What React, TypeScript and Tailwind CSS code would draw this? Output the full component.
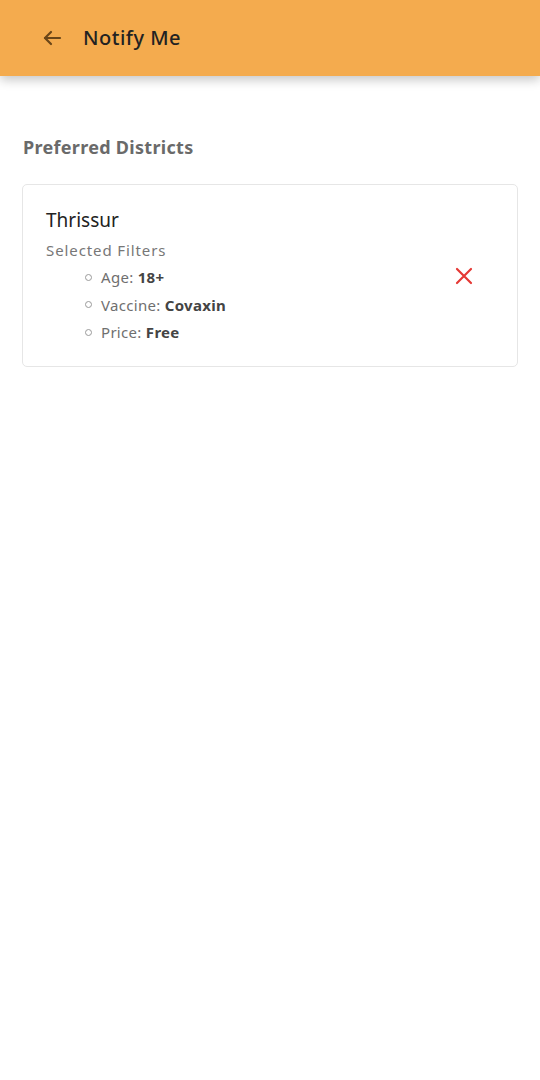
import React from "react";

const font = { fontFamily: '"Noto Sans", "DejaVu Sans", sans-serif' };

function Item({ label, value }: { label: string; value: string }) {
  return (
    <li className="flex items-center h-[27.5px]">
      <span className="w-[7px] h-[7px] rounded-full border border-[#9a9a9a] mr-[9px] ml-[1px]" />
      <span className="text-[15px] text-[#6f6f6f] tracking-[0.3px]">{label}:&nbsp;</span>
      <span className="text-[15px] text-[#444] font-bold tracking-[0.3px]">{value}</span>
    </li>
  );
}

export default function App() {
  return (
    <div className="w-[540px] h-[1080px] bg-white relative overflow-hidden" style={font}>
      <header className="h-[76px] bg-[#f4ab4e] flex items-center pl-[40px] shadow-[0_4px_10px_rgba(0,0,0,0.22)] relative z-10">
        <svg width="24" height="24" viewBox="0 0 24 24" fill="none" stroke="#6b4618" strokeWidth="2.2" strokeLinecap="round" strokeLinejoin="round">
          <path d="M20 12H5" />
          <path d="M11 6l-6 6 6 6" />
        </svg>
        <h1 className="ml-[19px] text-[20px] text-[#222] font-medium tracking-[0.5px]">Notify Me</h1>
      </header>
      <main className="px-[22px] pt-[62px]">
        <h2 className="text-[18px] font-bold text-[#6a6a6a] ml-[1px] leading-none tracking-[0.3px]">Preferred Districts</h2>
        <div className="mt-[28px] border border-[#e6e6e6] rounded-[5px] h-[183px] flex items-start pl-[23px] pr-[44px] pt-[22px]">
          <div className="flex-1">
            <div className="text-[19px] text-[#222] leading-[26px]">Thrissur</div>
            <div className="text-[15px] text-[#777] mt-[6px] tracking-[0.9px]">Selected Filters</div>
            <ul className="ml-[38px] mt-[2px]">
              <Item label="Age" value="18+" />
              <Item label="Vaccine" value="Covaxin" />
              <Item label="Price" value="Free" />
            </ul>
          </div>
          <svg className="mt-[60px]" width="18" height="18" viewBox="0 0 18 18" stroke="#e53935" strokeWidth="2.2" strokeLinecap="round">
            <path d="M2 2l14 14M16 2L2 16" />
          </svg>
        </div>
      </main>
    </div>
  );
}
